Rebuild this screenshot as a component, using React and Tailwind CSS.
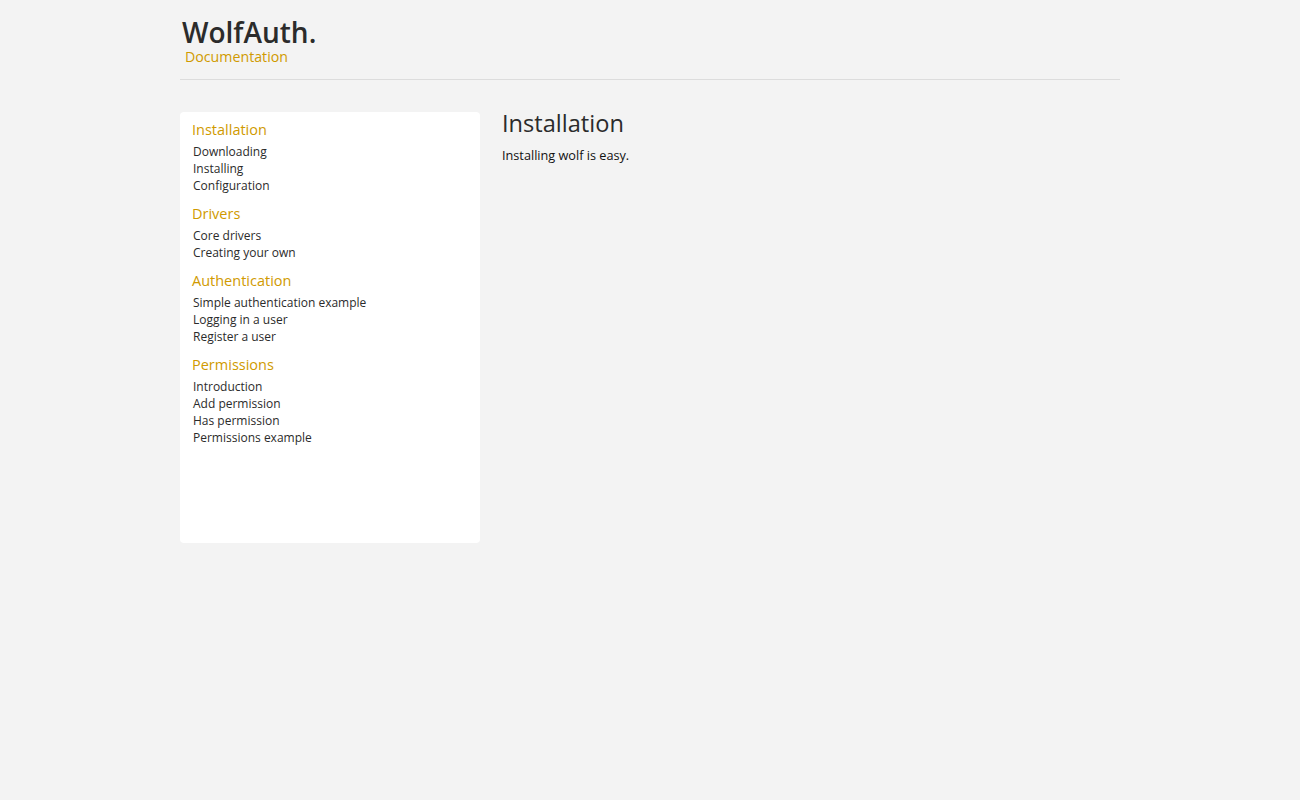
const sections = [
  { title: 'Installation', items: ['Downloading', 'Installing', 'Configuration'] },
  { title: 'Drivers', items: ['Core drivers', 'Creating your own'] },
  { title: 'Authentication', items: ['Simple authentication example', 'Logging in a user', 'Register a user'] },
  { title: 'Permissions', items: ['Introduction', 'Add permission', 'Has permission', 'Permissions example'] },
];

export default function App() {
  return (
    <div className="min-h-screen bg-[#f3f3f3] font-['Open_Sans',sans-serif]">
      <div className="mx-auto w-[940px]">
        <header className="border-b border-[#dcdcdc] pt-[16px] pb-[13px]">
          <h1 className="pl-[2px] text-[28px] font-semibold leading-[32px] text-[#2b2b2b]">WolfAuth.</h1>
          <p className="pl-[5px] text-[14.2px] leading-[18px] text-[#d09a00]">Documentation</p>
        </header>

        <div className="mt-[32px] flex gap-[22px]">
          <nav className="h-[431px] w-[300px] shrink-0 rounded-[4px] bg-white px-[12px] pt-[7px]">
            {sections.map((s) => (
              <div key={s.title} className="mb-[9px]">
                <h3 className="text-[14.5px] leading-[22px] text-[#d09a00]">{s.title}</h3>
                <ul className="mt-[2px] pl-[1px]">
                  {s.items.map((item) => (
                    <li key={item} className="text-[12px] leading-[17px] text-[#2b2b2b]">
                      {item}
                    </li>
                  ))}
                </ul>
              </div>
            ))}
          </nav>

          <main className="flex-1">
            <h2 className="mt-[-5px] text-[23.6px] leading-[32px] text-[#2b2b2b]">Installation</h2>
            <p className="mt-[7px] text-[12.7px] leading-[18px] text-[#111]">Installing wolf is easy.</p>
          </main>
        </div>
      </div>
    </div>
  );
}
